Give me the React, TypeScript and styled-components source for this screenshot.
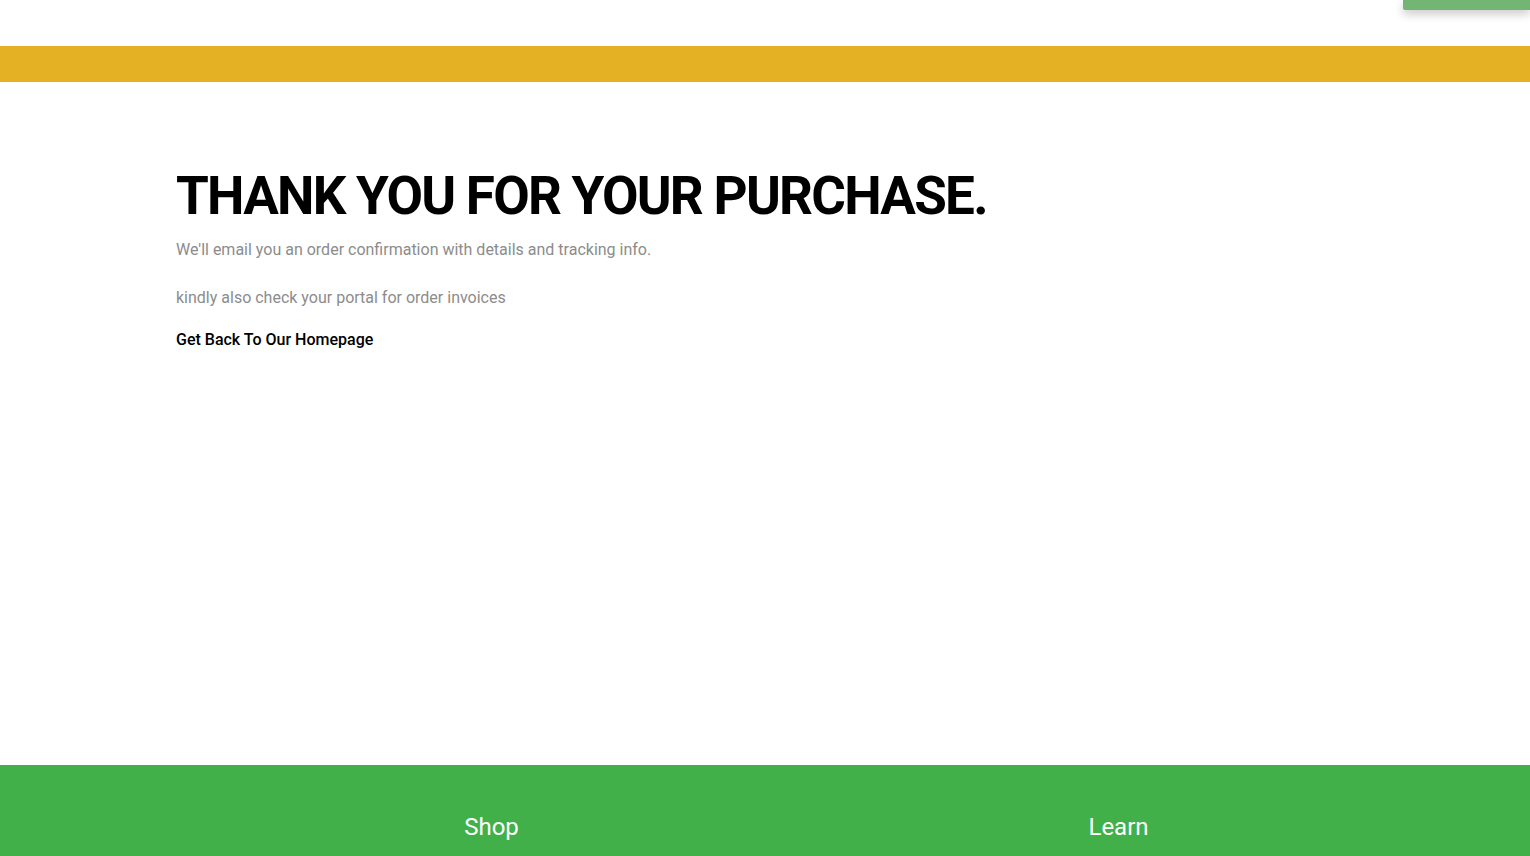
import React from "react";
import styled, { createGlobalStyle } from "styled-components";

const Global = createGlobalStyle`
  html, body { margin: 0; padding: 0; background: #fff; }
  body { font-family: Roboto, "Liberation Sans", Arial, sans-serif; }
  * { box-sizing: border-box; }
`;

const Page = styled.div`
  min-height: 856px;
  display: flex;
  flex-direction: column;
`;

const Header = styled.header`
  position: relative;
  height: 46px;
  background: #fff;
`;

const CornerTab = styled.div`
  position: absolute;
  top: 0;
  right: 0;
  width: 127px;
  height: 10px;
  background: #73b574;
  border-bottom-left-radius: 2px;
  box-shadow: 0 4px 10px rgba(0, 0, 0, 0.22);
`;

const Strip = styled.div`
  height: 36px;
  background: #e4b024;
`;

const Main = styled.main`
  flex: 1;
  height: 683px;
  padding: 84px 0 0 176px;
`;

const Title = styled.h1`
  margin: 0;
  font-family: Roboto, "Liberation Sans", sans-serif;
  font-weight: 700;
  font-size: 53px;
  line-height: 60px;
  letter-spacing: -1.75px;
  color: #000;
`;

const Note = styled.p<{ $gap: number }>`
  margin: ${(p) => p.$gap}px 0 0;
  font-size: 16px;
  line-height: 20px;
  color: #8c8c8c;
`;

const HomeLink = styled.a`
  display: block;
  margin-top: 22px;
  font-size: 16px;
  line-height: 20px;
  font-weight: 500;
  color: #000;
  text-decoration: none;
`;

const Footer = styled.footer`
  height: 91px;
  background: #41b049;
  display: grid;
  grid-template-columns: 627px 627px;
  padding: 48px 0 0 178px;
`;

const FooterHeading = styled.h3`
  margin: 0;
  text-align: center;
  font-weight: 400;
  font-size: 24px;
  line-height: 28px;
  color: #fff;
`;

export default function App() {
  return (
    <>
      <Global />
      <Page>
        <Header>
          <CornerTab />
        </Header>
        <Strip />
        <Main>
          <Title>THANK YOU FOR YOUR PURCHASE.</Title>
          <Note $gap={14}>We'll email you an order confirmation with details and tracking info.</Note>
          <Note $gap={28}>kindly also check your portal for order invoices</Note>
          <HomeLink href="#">Get Back To Our Homepage</HomeLink>
        </Main>
        <Footer>
          <FooterHeading>Shop</FooterHeading>
          <FooterHeading>Learn</FooterHeading>
        </Footer>
      </Page>
    </>
  );
}
